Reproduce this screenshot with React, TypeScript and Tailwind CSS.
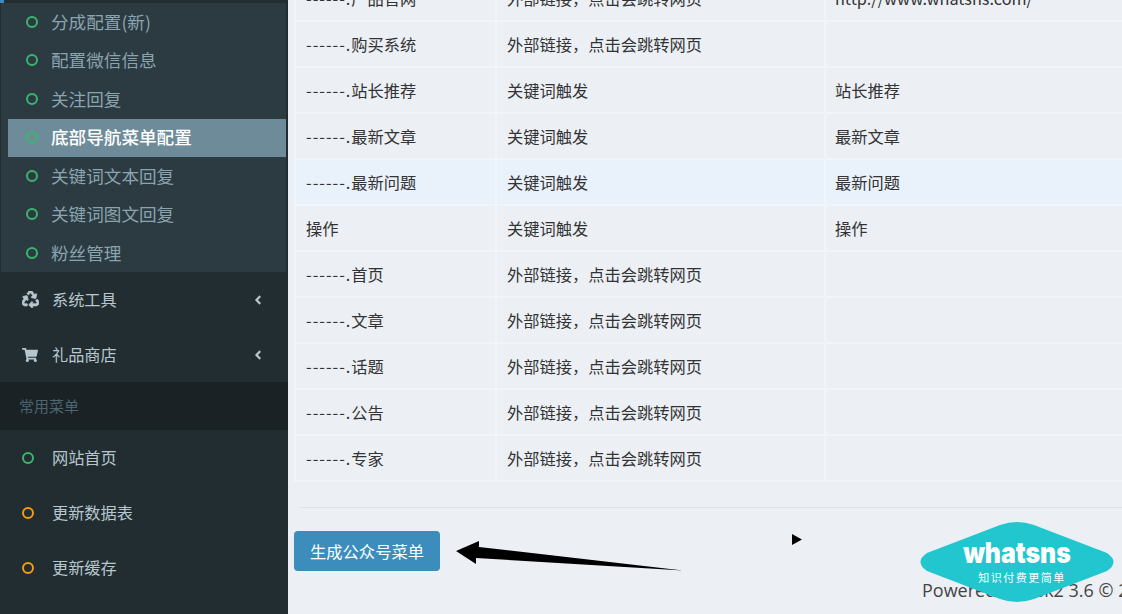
import { FaRecycle, FaShoppingCart, FaAngleLeft } from "react-icons/fa";

const CJK = { fontFamily: '"Noto Sans CJK SC", "Liberation Sans", sans-serif' };

const subItems = ["分成配置(新)", "配置微信信息", "关注回复", "底部导航菜单配置", "关键词文本回复", "关键词图文回复", "粉丝管理"];
const rows: [string, string, string, string?][] = [
  ["------.产品官网", "外部链接，点击会跳转网页", "http://www.whatsns.com/"],
  ["------.购买系统", "外部链接，点击会跳转网页", ""],
  ["------.站长推荐", "关键词触发", "站长推荐"],
  ["------.最新文章", "关键词触发", "最新文章"],
  ["------.最新问题", "关键词触发", "最新问题", "hl"],
  ["操作", "关键词触发", "操作"],
  ["------.首页", "外部链接，点击会跳转网页", ""],
  ["------.文章", "外部链接，点击会跳转网页", ""],
  ["------.话题", "外部链接，点击会跳转网页", ""],
  ["------.公告", "外部链接，点击会跳转网页", ""],
  ["------.专家", "外部链接，点击会跳转网页", ""],
];

function Ring({ color }: { color: string }) {
  return <span className={`h-3 w-3 shrink-0 rounded-full border-2 ${color}`} />;
}

function MenuRow({ icon, label, chevron }: { icon: React.ReactNode; label: string; chevron?: boolean }) {
  return (
    <div className="flex h-[55px] items-center pl-[22px] pr-[23px] text-[16.2px] text-[#b8c7ce]">
      <span className="flex w-[30px] shrink-0 items-center">{icon}</span>
      <span className="flex-1">{label}</span>
      {chevron && <FaAngleLeft className="text-[14px]" />}
    </div>
  );
}

function Name({ text }: { text: string }) {
  if (!text.startsWith("------.")) return <>{text}</>;
  return (
    <>
      <span className="tracking-[1px]">------.</span>
      {text.slice(7)}
    </>
  );
}

export default function App() {
  return (
    <div className="flex h-[614px] w-[1122px] overflow-hidden bg-[#ecf0f5] text-[#333]" style={CJK}>
      <aside className="h-full w-[288px] shrink-0 bg-[#222d32]">
        <div className="h-[3px] w-[4px] bg-[#3c8dbc]" />
        <div className="ml-px mr-[2px] h-[269px] bg-[#2c3b41]">
          {subItems.map((t, i) => (
            <div
              key={t}
              className={`flex h-[38.5px] items-center gap-[13px] pb-[1px] text-[17.6px] ${
                i === 3 ? "ml-[7px] bg-[#6d8b99] pl-[18px] font-medium text-white" : "pl-[25px] text-[#8aa4af]"
              }`}
            >
              <Ring color="border-[#3cb56c]" />
              <span>{t}</span>
            </div>
          ))}
        </div>
        <MenuRow icon={<FaRecycle className="text-[17px]" stroke="currentColor" strokeWidth={24} />} label="系统工具" chevron />
        <MenuRow icon={<FaShoppingCart className="text-[16px]" />} label="礼品商店" chevron />
        <div className="flex h-[48px] items-center bg-[#1a2226] pl-[19px] text-[15px] text-[#4b646f]">常用菜单</div>
        <MenuRow icon={<Ring color="border-[#3cb56c]" />} label="网站首页" />
        <MenuRow icon={<Ring color="border-[#f39c12]" />} label="更新数据表" />
        <MenuRow icon={<Ring color="border-[#f39c12]" />} label="更新缓存" />
      </aside>

      <main className="relative min-w-0 flex-1 pl-[6px]">
        <table className="-mt-[26px] w-[860px] table-fixed border-collapse text-[16.25px]">
          <colgroup>
            <col className="w-[201px]" />
            <col className="w-[329px]" />
            <col />
          </colgroup>
          <tbody>
            {rows.map((r) => (
              <tr key={r[0]} className={`h-[46px] ${r[3] ? "bg-[#e9f1fb]" : ""}`}>
                <td className="border-2 border-[#f1f4f8] px-[10px] align-middle leading-[22px] whitespace-nowrap">
                  <Name text={r[0]} />
                </td>
                <td className="border-2 border-[#f1f4f8] px-[10px] align-middle leading-[22px] whitespace-nowrap">{r[1]}</td>
                <td className="border-2 border-[#f1f4f8] px-[9px] align-middle leading-[22px] whitespace-nowrap">{r[2]}</td>
              </tr>
            ))}
          </tbody>
        </table>

        <div className="mt-[25px] ml-[5px] border-t border-[#e0e4e8]" />

        <button className="mt-[23px] flex h-[40px] w-[146px] items-center justify-center rounded-[4px] bg-[#3c8dbc] text-[16.3px] text-white">
          生成公众号菜单
        </button>

        <p
          className="absolute left-[634px] top-[579px] whitespace-nowrap text-[18px] leading-[22px] text-[#444]"
          style={{ fontFamily: '"Open Sans", sans-serif' }}
        >
          Powered by ask2 3.6 © 2016
        </p>

        <svg className="absolute left-[166px] top-[536px]" width="230" height="40" viewBox="0 0 230 40">
          <path d="M2 15 L25 5 L25 11 L229 34.5 L22 22 L22 28 Z" fill="#000" />
        </svg>
        <svg className="absolute left-[504px] top-[534px]" width="10" height="11" viewBox="0 0 10 11">
          <path d="M0 0 L10 5.5 L0 11 Z" fill="#000" />
        </svg>

        <div className="absolute left-[632px] top-[522px] flex h-[80px] w-[194px] flex-col items-center">
          <svg className="absolute inset-0" width="194" height="80" viewBox="0 0 194 80">
            <path
              d="M7 31 L80 3 Q97 -3 114 3 L187 31 Q200 40 187 49 L114 77 Q97 83 80 77 L7 49 Q-6 40 7 31 Z"
              fill="#22c6ce"
            />
          </svg>
          <span
            className="relative mt-[15px] scale-x-[0.855] text-[29px] leading-[32px] font-black text-white"
            style={{ fontFamily: 'Inter, "Liberation Sans", sans-serif' }}
          >
            whatsns
          </span>
          <span className="relative mt-[1px] ml-[10px] text-[11px] leading-[14px] tracking-[1.5px] text-white">知识付费更简单</span>
        </div>
      </main>
    </div>
  );
}
